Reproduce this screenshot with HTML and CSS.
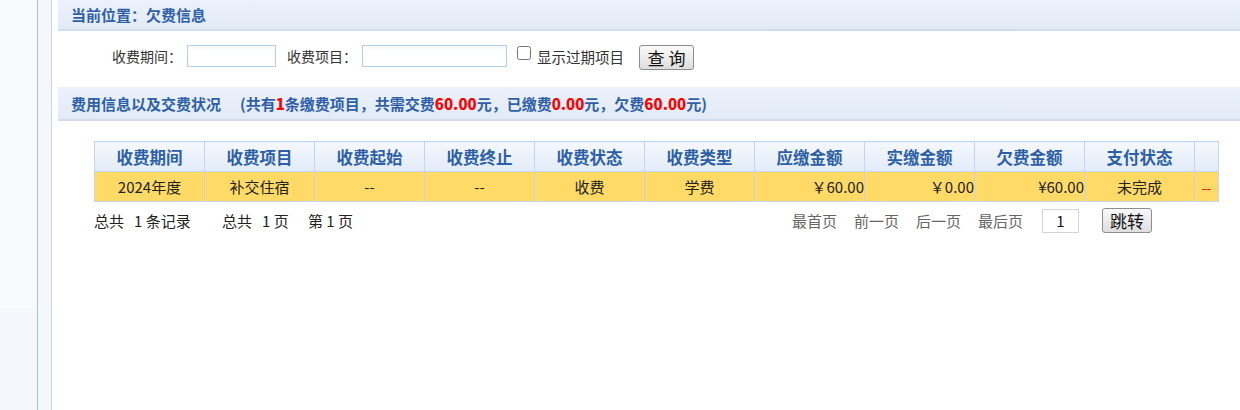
FILE: index.html
```html
<!DOCTYPE html>
<html lang="zh-CN">
<head>
<meta charset="utf-8">
<title>欠费信息</title>
<link rel="stylesheet" href="styles.css">
</head>
<body>
<div class="frame">
  <div class="side"></div>
  <div class="strip"></div>
  <div class="main">
    <div class="bar bar-top">当前位置：欠费信息</div>
    <form class="search">
      <label class="lbl">收费期间：</label>
      <input class="txt txt-s" type="text">
      <label class="lbl lbl-2">收费项目：</label>
      <input class="txt txt-l" type="text">
      <label class="chk"><input type="checkbox"><span>显示过期项目</span></label>
      <button class="btn btn-q" type="button">查 询</button>
    </form>
    <div class="bar bar-info">费用信息以及交费状况<span class="sum">(共有<b class="red">1</b>条缴费项目，共需交费<b class="red">60.00</b>元，已缴费<b class="red">0.00</b>元，欠费<b class="red">60.00</b>元)</span></div>
    <div class="tablewrap">
      <table class="grid">
        <thead>
          <tr>
            <th>收费期间</th><th>收费项目</th><th>收费起始</th><th>收费终止</th><th>收费状态</th>
            <th>收费类型</th><th>应缴金额</th><th>实缴金额</th><th>欠费金额</th><th>支付状态</th><th class="last"></th>
          </tr>
        </thead>
        <tbody>
          <tr>
            <td>2024年度</td><td>补交住宿</td><td>--</td><td>--</td><td>收费</td>
            <td>学费</td><td class="num">￥60.00</td><td class="num">￥0.00</td><td class="num">¥60.00</td><td>未完成</td><td class="last red-t">--</td>
          </tr>
        </tbody>
      </table>
      <div class="pager">
        <div class="pinfo"><span class="p1">总共&nbsp;&nbsp; 1 条记录</span><span class="p2">总共&nbsp;&nbsp; 1 页</span><span class="p3">第 1 页</span></div>
        <div class="plinks">
          <span>最首页</span><span>前一页</span><span>后一页</span><span>最后页</span>
          <input class="pg" type="text" value="1">
          <button class="btn btn-go" type="button">跳转</button>
        </div>
      </div>
    </div>
  </div>
</div>
</body>
</html>
```
FILE: styles.css
```css
html, body {
  margin: 0;
  padding: 0;
  height: 410px;
  overflow: hidden;
  background: #fff;
  font-family: "Noto Sans CJK SC", "Noto Sans", sans-serif;
  color: #222;
}
.frame {
  display: flex;
  height: 410px;
}
.side {
  width: 37px;
  flex: none;
  background: linear-gradient(#f8fafd 0, #f8fafd 309px, #f4f8fd 309px);
  border-right: 1px solid #9fc4e8;
}
.strip {
  width: 13px;
  flex: none;
  background: #f4f8fd;
  border-right: 1px solid #c3d6ec;
}
.main {
  flex: 1;
  padding-left: 6px;
  min-width: 0;
}
.bar {
  box-sizing: border-box;
  padding-left: 13px;
  font-size: 15px;
  font-weight: bold;
  color: #2f5fa6;
  display: flex;
  align-items: center;
  background: linear-gradient(#ebf2fb, #e2eaf6);
  border-bottom: 2px solid #d1ddef;
}
.bar-top {
  height: 31px;
}
.bar-info {
  height: 34px;
  margin-top: 6px;
}
.sum {
  margin-left: 19px;
}
.red {
  color: #ff0000;
}
.search {
  display: flex;
  align-items: center;
  height: 50px;
  margin: 0;
  padding: 0 0 0 54px;
  font-size: 14px;
  color: #333;
}
.lbl-2 {
  margin-left: 11px;
}
.txt {
  box-sizing: border-box;
  height: 22px;
  margin: 0 0 0 5px;
  border: 1px solid #b8cfe8;
  background: linear-gradient(#f6f8fb, #fff 5px);
  padding: 0;
}
.txt-s { width: 89px; }
.txt-l { width: 145px; }
.chk {
  display: flex;
  align-items: center;
  margin-left: 10px;
  font-size: 14.5px;
}
.chk input {
  margin: 0 6px 6px 0;
  width: 14px;
  height: 14px;
}
.btn {
  box-sizing: border-box;
  font-family: "Noto Sans CJK SC", sans-serif;
  font-size: 17px;
  color: #111;
  background: linear-gradient(#fafafa, #dedede);
  border: 1px solid #8d8d8d;
  border-radius: 3px;
  padding: 0;
  line-height: 1;
}
.btn-q {
  width: 55px;
  height: 25px;
  margin-left: 15px;
  margin-top: 2px;
}
.tablewrap {
  padding: 20px 22px 0 36px;
}
.grid {
  border-collapse: collapse;
  table-layout: fixed;
  width: 1125px;
}
.grid th, .grid td {
  border: 1px solid #c2d6ee;
  width: 109px;
  height: 29px;
  padding: 0;
  text-align: center;
}
.grid th.last, .grid td.last {
  width: 23px;
}
.grid th {
  font-size: 16.5px;
  font-weight: bold;
  color: #2c5fa5;
  background: linear-gradient(#f5f8fd, #e2ebf8);
}
.grid td {
  font-size: 15px;
  color: #222;
  background: #ffda66;
}
.grid td.num {
  text-align: right;
}
.grid td.red-t {
  color: #ff0000;
  font-size: 14px;
}
.pager {
  display: flex;
  justify-content: space-between;
  align-items: center;
  margin-top: 6px;
  width: 1124px;
  font-size: 15px;
}
.pinfo {
  display: flex;
}
.p1 { width: 128px; }
.p2 { width: 86px; }
.plinks {
  display: flex;
  align-items: center;
  color: #666;
  margin-right: 66px;
}
.plinks span {
  margin-right: 17px;
}
.plinks span:nth-child(4) {
  margin-right: 19px;
}
.pg {
  box-sizing: border-box;
  width: 37px;
  height: 24px;
  margin: 0;
  border: 1px solid #d4d4d4;
  text-align: center;
  font-size: 15px;
  padding: 0;
  font-family: "Noto Sans CJK SC", sans-serif;
  color: #111;
}
.btn-go {
  width: 50px;
  height: 25px;
  margin-left: 23px;
}
```
